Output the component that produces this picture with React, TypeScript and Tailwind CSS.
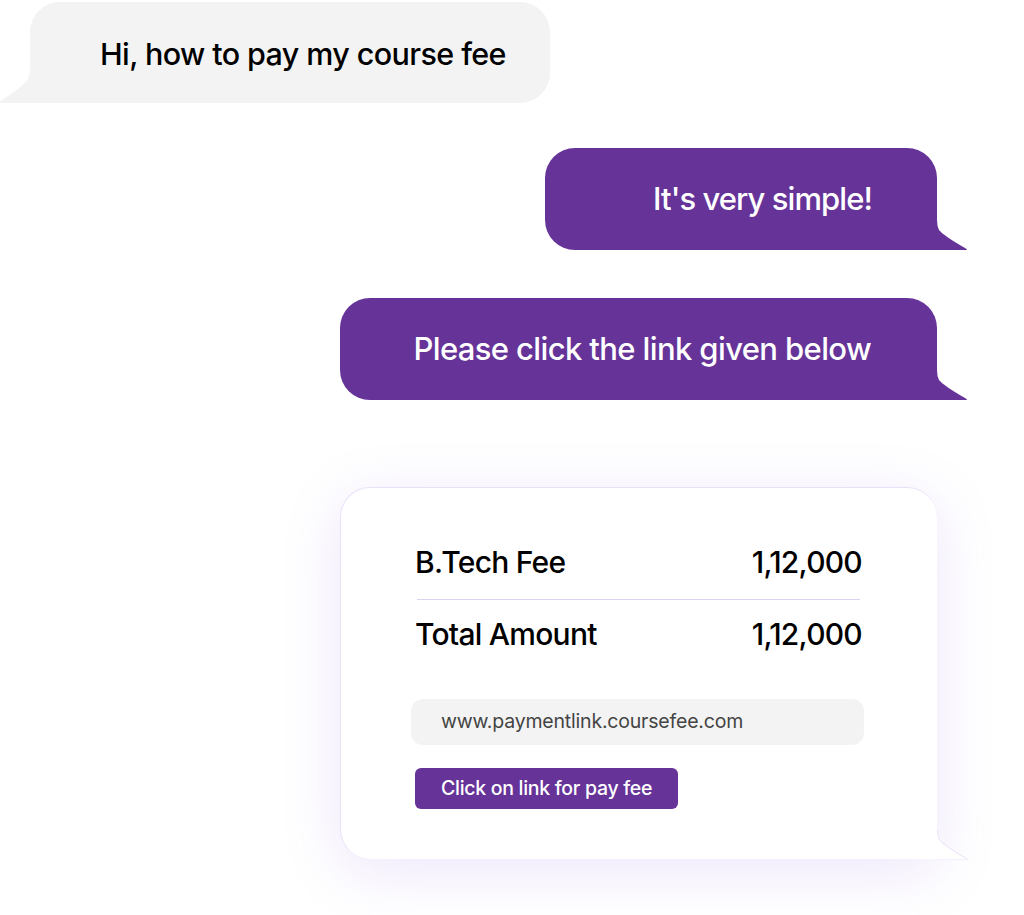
const font = { fontFamily: 'Inter, "Noto Sans", sans-serif' }

function TailLeft({ color }: { color: string }) {
  return (
    <svg
      className="absolute bottom-0 left-[-30px]"
      width="31"
      height="34"
      viewBox="0 0 31 34"
    >
      <path d="M30 0 L31 0 L31 34 L0 34 Q0 32 2 31 Q24 17 28 10 Q30 6 30 0 Z" fill={color} />
    </svg>
  )
}

function TailRight({ color }: { color: string }) {
  return (
    <svg
      className="absolute bottom-0 right-[-31px]"
      width="32"
      height="30"
      viewBox="0 0 32 30"
    >
      <path d="M1 0 L0 0 L0 30 L31 30 Q31 29 29 28 Q8 16 3 10 Q1 6 1 0 Z" fill={color} />
    </svg>
  )
}

function Row({ label, value }: { label: string; value: string }) {
  return (
    <div className="flex items-center justify-between text-[30px] font-medium text-black tracking-[-0.025em] leading-none">
      <span>{label}</span>
      <span>{value}</span>
    </div>
  )
}

export default function App() {
  return (
    <div className="w-[1024px] h-[915px] bg-white overflow-hidden relative" style={font}>
      <div className="flex flex-col pt-[2px]">
        <div className="relative ml-[30px] w-[520px] h-[101px] bg-[#f3f3f3] rounded-[30px] rounded-bl-none flex items-center pl-[70px] pt-[3px]">
          <TailLeft color="#f3f3f3" />
          <span className="text-[30.5px] font-medium text-black tracking-[-0.02em]">Hi, how to pay my course fee</span>
        </div>

        <div className="relative mt-[45px] ml-[545px] w-[392px] h-[102px] bg-[#663399] rounded-[30px] rounded-br-none flex items-center justify-end pr-[65px]">
          <TailRight color="#663399" />
          <span className="text-[31px] font-medium text-white tracking-[-0.03em]">It's very simple!</span>
        </div>

        <div className="relative mt-[48px] ml-[340px] w-[597px] h-[102px] bg-[#663399] rounded-[30px] rounded-br-none flex items-center justify-end pr-[66px]">
          <TailRight color="#663399" />
          <span className="text-[31px] font-medium text-white tracking-[-0.02em]">Please click the link given below</span>
        </div>

        <div className="relative mt-[87px] ml-[340px] w-[597px] h-[372px] bg-white rounded-[30px] rounded-br-none border border-[#e9e1f8] border-r-0 border-b-0 shadow-[0_12px_60px_rgba(140,100,230,0.16)] pl-[74px] pr-[75px] pt-[59px]">
          <svg className="absolute bottom-[-1px] right-[-32px]" width="33" height="30" viewBox="0 0 33 30">
            <path d="M1 0 L0 0 L0 30 L32 30 Q32 29 30 28 Q9 16 4 10 Q2 6 2 0 Z" fill="#ffffff" />
            <path d="M1.5 0 Q1.5 6 3.5 10 Q8.5 16 29.5 28 Q31.5 29 31.5 30 L0 30" fill="none" stroke="#e9e1f8" strokeWidth="1" />
          </svg>
          <div className="flex flex-col">
            <Row label="B.Tech Fee" value="1,12,000" />
            <div className="h-px bg-[#ddd3f1] mt-[22px] mx-[2px]" />
            <div className="mt-[19px]">
              <Row label="Total Amount" value="1,12,000" />
            </div>
          </div>
          <div className="mt-[50px] -ml-[4px] w-[453px] h-[46px] bg-[#f3f3f3] rounded-[12px] flex items-center pl-[30px]">
            <span className="text-[19.5px] text-[#444444] tracking-[-0.01em]">www.paymentlink.coursefee.com</span>
          </div>
          <button className="mt-[23px] w-[263px] h-[41px] bg-[#663399] rounded-[6px] flex items-center pl-[26px]">
            <span className="text-[19.5px] font-medium text-white tracking-[-0.015em]">Click on link for pay fee</span>
          </button>
        </div>
      </div>
    </div>
  )
}
